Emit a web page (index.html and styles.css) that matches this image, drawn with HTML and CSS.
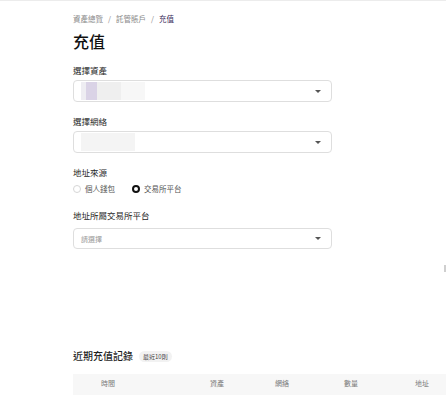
FILE: index.html
```html
<!DOCTYPE html>
<html lang="zh-Hant">
<head>
    <meta charset="UTF-8">
    <meta name="viewport" content="width=device-width, initial-scale=1.0">
    <title>充值</title>
    <link rel="stylesheet" href="styles.css">
</head>
<body>
    <div class="page">
        <div class="breadcrumb">
            <span>資產總覽</span>
            <span class="sep">/</span>
            <span>託管賬戶</span>
            <span class="sep">/</span>
            <span class="current">充值</span>
        </div>
        <h1 class="title">充值</h1>

        <div class="field">
            <div class="label">選擇資產</div>
            <div class="select">
                <div class="blur blur-asset">
                    <span class="b1"></span><span class="b2"></span><span class="b3"></span><span class="b4"></span>
                </div>
                <span class="caret"></span>
            </div>
        </div>

        <div class="field">
            <div class="label">選擇網絡</div>
            <div class="select">
                <div class="blur blur-net"><span></span></div>
                <span class="caret"></span>
            </div>
        </div>

        <div class="field">
            <div class="label">地址來源</div>
            <div class="radios">
                <label class="radio"><span class="dot"></span>個人錢包</label>
                <label class="radio checked"><span class="dot"></span>交易所平台</label>
            </div>
        </div>

        <div class="field">
            <div class="label label-wide">地址所屬交易所平台</div>
            <div class="select select-sm">
                <span class="placeholder">請選擇</span>
                <span class="caret"></span>
            </div>
        </div>

        <div class="records">
            <div class="records-head">
                <h2>近期充值記錄</h2>
                <span class="badge">最近10則</span>
            </div>
            <div class="table-head">
                <span>時間</span>
                <span>資產</span>
                <span>網絡</span>
                <span>數量</span>
                <span>地址</span>
            </div>
        </div>
    </div>
    <span class="edge-mark"></span>
</body>
</html>
```

FILE: styles.css
```css
* {
    margin: 0;
    padding: 0;
    box-sizing: border-box;
}

body {
    font-family: 'Noto Sans CJK TC', 'Noto Sans', sans-serif;
    background: #fff;
    color: #1f1f1f;
    border-top: 1px solid #ececec;
    overflow: hidden;
    height: 395px;
}

.page {
    padding: 12px 0 0 73px;
}

.breadcrumb {
    display: flex;
    gap: 5px;
    font-size: 7.5px;
    line-height: 12px;
    color: #8a8a8a;
}

.breadcrumb .current {
    color: #3b2c5a;
}

.title {
    font-size: 16px;
    font-weight: 500;
    line-height: 24px;
    margin-top: 4px;
    color: #111;
}

.field {
    width: 259px;
    margin-top: 11px;
}

.label {
    font-size: 8.5px;
    line-height: 13px;
    color: #262626;
    margin-bottom: 3px;
}

.label-wide {
    margin-bottom: 6px;
}

.select {
    height: 22px;
    border: 1px solid #dedede;
    border-radius: 4px;
    display: flex;
    align-items: center;
    justify-content: space-between;
    padding: 0 10px 0 7px;
    margin-bottom: 13px;
}

.select-sm {
    height: 21px;
    margin-bottom: 0;
}

.caret {
    width: 0;
    height: 0;
    border-left: 3px solid transparent;
    border-right: 3px solid transparent;
    border-top: 3px solid #555;
}

.placeholder {
    font-size: 7px;
    color: #9a9a9a;
}

.blur {
    display: flex;
    height: 18px;
}

.blur-asset .b1 { width: 5px; background: #eeedf2; }
.blur-asset .b2 { width: 11px; background: #dad3e6; }
.blur-asset .b3 { width: 24px; background: #efefef; }
.blur-asset .b4 { width: 24px; background: #f7f7f7; }

.blur-net span {
    width: 54px;
    background: #f4f4f4;
}

.radios {
    display: flex;
    gap: 17px;
    font-size: 7.5px;
    line-height: 12px;
    color: #555;
    margin-top: 4px;
    margin-bottom: 14px;
}

.radio {
    display: flex;
    align-items: center;
    gap: 4px;
}

.dot {
    width: 8px;
    height: 8px;
    border-radius: 50%;
    border: 1px solid #d6d6d6;
}

.radio.checked .dot {
    border: 2.5px solid #111;
}

.records {
    margin-top: 99px;
}

.records-head {
    display: flex;
    align-items: center;
    gap: 6px;
}

.records-head h2 {
    font-size: 10px;
    font-weight: 500;
    line-height: 16px;
    color: #1f1f1f;
}

.badge {
    font-size: 6px;
    line-height: 9px;
    background: #f2f2f2;
    color: #444;
    border-radius: 6px;
    padding: 1px 4px;
}

.table-head {
    display: grid;
    grid-template-columns: 109px 65px 69px 71px 1fr;
    margin-top: 10px;
    height: 26px;
    padding: 5px 0 0 28px;
    line-height: 9px;
    background: #f7f7f7;
    font-size: 7px;
    color: #7a7a7a;
    width: 373px;
}

.edge-mark {
    position: absolute;
    right: 0;
    top: 265px;
    width: 2px;
    height: 7px;
    background: #cfcfcf;
}
```
